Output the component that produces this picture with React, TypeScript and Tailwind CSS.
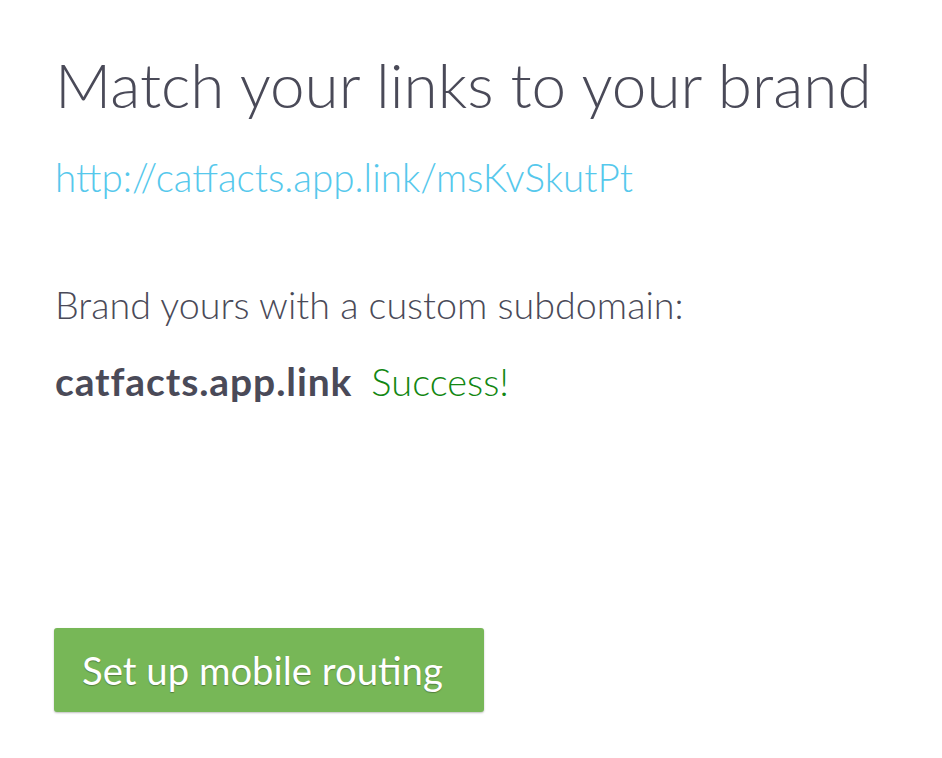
export default function App() {
  return (
    <div className="min-h-[758px] w-[942px] bg-white pl-[55px] pt-[47px] font-['Lato',sans-serif] text-[#4a4a58]">
      <h1 className="whitespace-nowrap text-[62px] font-light leading-[74px]">Match your links to your brand</h1>
      <a className="mt-[33px] block whitespace-nowrap text-[38.6px] font-light leading-[47px] text-[#56c8ec]">http://catfacts.app.link/msKvSkutPt</a>
      <p className="mt-[81px] whitespace-nowrap text-[37.7px] font-light leading-[46px]">Brand yours with a custom subdomain:</p>
      <div className="mt-[30px] flex h-[47px] items-baseline gap-[19px] whitespace-nowrap leading-[47px]">
        <span className="text-[39px] font-bold tracking-[0.9px]">catfacts.app.link</span>
        <span className="text-[38px] font-light text-[#128712]">Success!</span>
      </div>
      <button className="mt-[223px] ml-[-1px] flex h-[84px] w-[430px] items-center rounded-[3px] bg-[#77b757] pl-[28px] text-[38.3px] leading-none text-white shadow-[0_1px_2px_rgba(0,0,0,0.25)] [text-shadow:0_1px_1px_rgba(0,0,0,0.3)]">
        Set up mobile routing
      </button>
    </div>
  );
}
